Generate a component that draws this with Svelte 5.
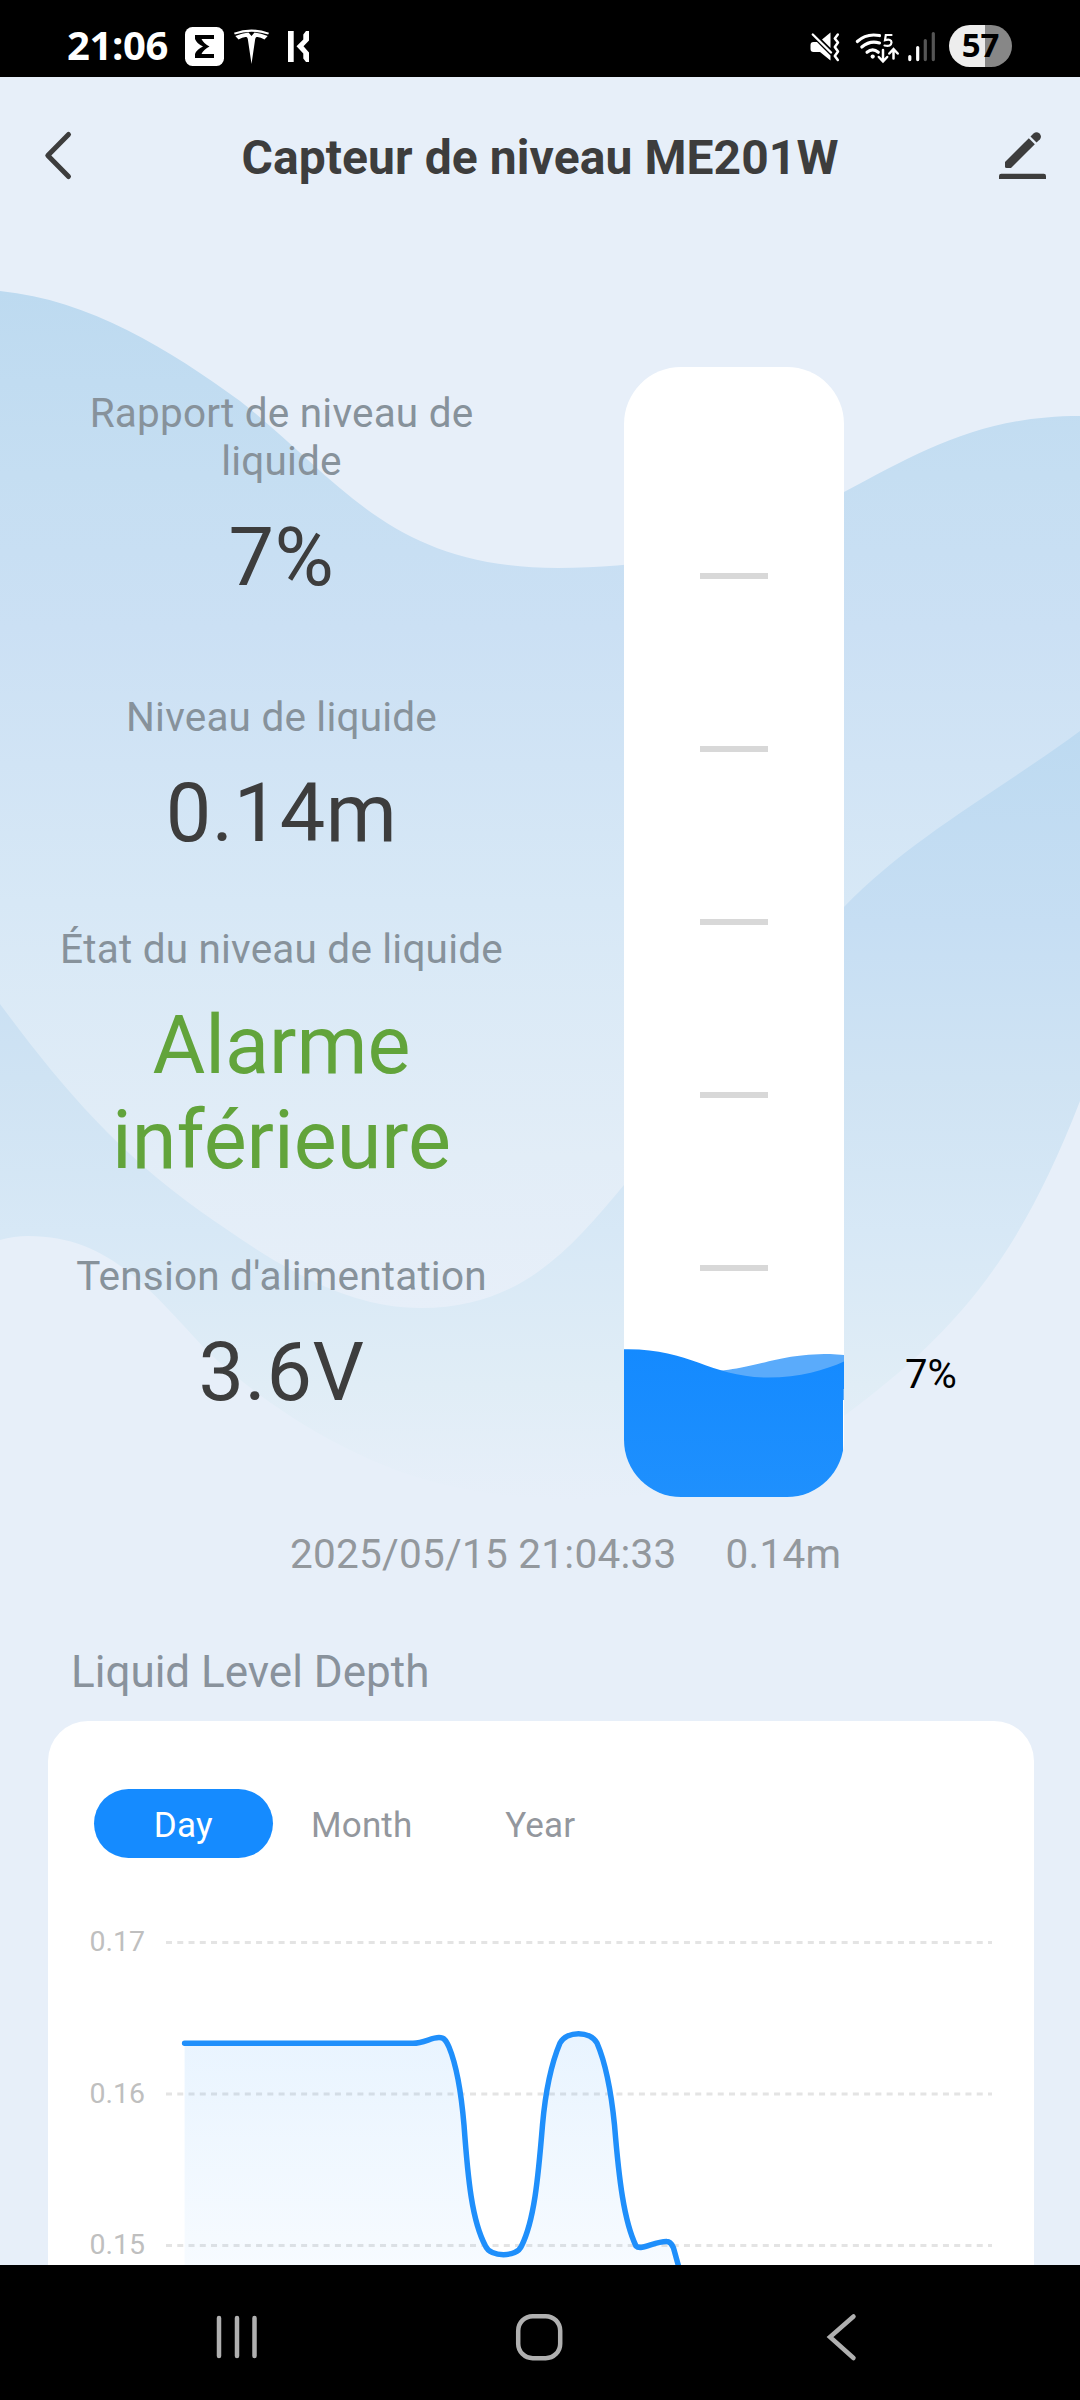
<script>
  const readings = [
    { label: 'Rapport de niveau de liquide', value: '7%', roomy: true },
    { label: 'Niveau de liquide', value: '0.14m' },
    { label: 'État du niveau de liquide', value: 'Alarme inférieure', alarm: true },
    { label: "Tension d'alimentation", value: '3.6V' }
  ];
  const ticks = [573, 746, 919, 1092, 1265];
  const grid = [
    { y: 1942.5, label: '0.17' },
    { y: 2094, label: '0.16' },
    { y: 2245.5, label: '0.15' }
  ];
  const tabs = ['Day', 'Month', 'Year'];
  let active = $state('Day');

  const curve =
    'M184.6 2043.3H413C424 2043.3 431 2037.6 439 2037.6C444 2037.6 446 2040 449 2047C456 2064 461 2090 464 2125C468 2180 472 2221 485.5 2246C490 2257.5 517 2257.5 521.5 2246C534 2221 538 2180 542.5 2125C546 2085 552 2062 560 2043C567 2030.5 590 2030.5 597 2043C606 2064 611 2090 614.5 2125C619 2180 624 2221 636 2246C641 2251 655 2241 667 2241.5C671 2241.5 672 2245 673.5 2248L681 2275';
</script>

<div class="phone">
  <div class="status">
    <div class="status-left">
      <span class="clock">21:06</span>
      <svg class="notif" viewBox="180 20 135 50" width="135" height="50">
        <rect x="185" y="27" width="39" height="39" rx="7.5" fill="#fff" />
        <path d="M195 35H214V39H201.5Q204 44 209.5 46.5Q204 49 201.5 54H214V58H195V54Q197 49 203 46.5Q197 44 195 39Z" fill="#000" />
        <path d="M234 32.8Q251.500 26.300 269 32.800L268.200 34.600Q251.500 28.800 234.800 34.600Z" fill="#fff" />
        <path d="M235.300 36Q242 33 248.500 32.500L251.500 36L254.500 32.500Q261 33 267.700 36L264.500 39.500Q260 36.500 256.500 37Q255.500 37.300 255.200 39L251.500 64L247.800 39Q247.500 37.300 246.500 37Q243 36.500 238.500 39.500Z" fill="#fff" />
        <path d="M288 31H293.700V62H288ZM309 31H306L303.300 34.500V39.500L296.500 46.300L303.300 53.500V58.500L306 62H309V52.500L303.500 46.300L309 40.500Z" fill="#fff" />
      </svg>
    </div>
    <div class="status-right">
      <svg viewBox="805 22 135 45" width="135" height="45" fill="none" stroke="#fff" stroke-linecap="round">
        <path d="M813.500 42H817L830.500 55.500V60.500L820 52H813.500Q810.500 52 810.500 49V45Q810.500 42 813.500 42Z" fill="#fff" stroke="none" />
        <path d="M822 39.500L830.500 32.500V48Z" fill="#fff" stroke="none" />
        <path d="M812.800 34.500L831 52.500" stroke-width="2.400" />
        <path d="M837.800 34.500L834.800 38.500L838 42.500L834.800 47L838 51.500L834.800 56L837.800 60" stroke-width="2.500" stroke-linejoin="round" />
        <path d="M857.300 41.500Q866.500 33 879.500 35.600M861.800 47Q870 40 879.500 43M867 52.300Q872.700 47.500 878.300 52.300" stroke-width="3.100" />
        <circle cx="872.700" cy="56.600" r="2.100" fill="#fff" stroke="none" />
        <path d="M891.500 35H885.800L885 40.200Q891.500 38.500 891.500 42.500Q891.200 47 884.500 45.500" stroke-width="2.200" />
        <path d="M883 50V61M878.800 57L883 61.500L887.200 57M893.500 58.500V49.500M889.300 53.500L893.500 49L897.700 53.500" stroke-width="2.500" />
        <path d="M909.800 56.500V59.600M917.700 47.500V59.600" stroke-width="3.200" />
        <path d="M925.300 40.500V59.600M933.300 33.500V59.600" stroke="#555" stroke-width="3.200" />
      </svg>
      <span class="battery">57</span>
    </div>
  </div>

  <main class="screen">
    <svg class="waves" viewBox="0 77 1080 1500" width="1080" height="1500">
      <defs>
        <linearGradient id="upper" gradientUnits="userSpaceOnUse" x1="0" y1="291" x2="0" y2="1310">
          <stop offset="0" stop-color="#bddaf0" />
          <stop offset=".18" stop-color="#c5def2" />
          <stop offset=".33" stop-color="#cbe0f4" />
          <stop offset=".6" stop-color="#d7e8f6" />
          <stop offset=".85" stop-color="#e2edf7" />
          <stop offset="1" stop-color="#e7eff9" />
        </linearGradient>
        <linearGradient id="lower" gradientUnits="userSpaceOnUse" x1="0" y1="731" x2="0" y2="1500">
          <stop offset="0" stop-color="#bddaf1" />
          <stop offset=".25" stop-color="#c6def3" />
          <stop offset=".45" stop-color="#cfe3f3" />
          <stop offset=".65" stop-color="#d7e8f6" />
          <stop offset=".85" stop-color="#e0edf6" />
          <stop offset="1" stop-color="#e7eff9" />
        </linearGradient>
      </defs>
      <path fill="url(#lower)" d="M0 900H844L1080 700V1101C1020 1255 960 1330 844 1416C700 1520 520 1510 413 1476C330 1448 260 1400 207 1351C150 1290 110 1236 28 1236Q14 1236 0 1240Z" />
      <path fill="url(#upper)" d="M0 291C90 300 170 350 240 401C340 480 390 568 558 568C680 568 760 540 844 492C920 452 980 416 1080 416V731C1000 790 910 838 844 907C780 985 710 1080 624 1185C570 1250 520 1308 421 1308C340 1308 270 1260 200 1211C115 1150 60 1085 0 1004Z" />
    </svg>

    <header>
      <svg viewBox="40 125 36 60" width="36" height="60">
        <path d="M68.500 134.500L47.800 155.500L68.500 176.500" fill="none" stroke="#3d3d3d" stroke-width="5" stroke-linecap="round" stroke-linejoin="round" />
      </svg>
      <h1>Capteur de niveau ME201W</h1>
      <svg viewBox="995 125 55 60" width="55" height="60" fill="#3d3d3d">
        <path d="M1005 162L1028.800 138.200L1034.800 144.200L1011 168H1006.500Q1005 168 1005 166.500Z" />
        <path d="M1030.500 136.500L1033.500 133.500Q1036.500 131 1039.500 133.500Q1042.300 136.500 1039.800 139.500L1036.500 142.500Z" />
        <path d="M999 179V176Q999 173.700 1001.300 173.700H1043.700Q1046 173.700 1046 176V179Z" />
      </svg>
    </header>

    <section class="hero">
      <div class="readings">
        {#each readings as r}
          <div class="reading" class:roomy={r.roomy}>
            <p class="label">{r.label}</p>
            <p class="value" class:alarm={r.alarm}>{r.value}</p>
          </div>
        {/each}
      </div>
      <svg class="tube" viewBox="624 367 220 1130" width="220" height="1130">
        <defs>
          <linearGradient id="water" x1="0" y1="0" x2="0" y2="1">
            <stop offset="0" stop-color="#148aff" />
            <stop offset="1" stop-color="#1f90fd" />
          </linearGradient>
          <clipPath id="glass"><rect x="624" y="367" width="220" height="1130" rx="57" /></clipPath>
        </defs>
        <g clip-path="url(#glass)">
          <rect x="624" y="367" width="220" height="1130" fill="#fff" />
          <path d="M700 1372C760 1370 770 1354 830 1354L844 1355V1400H700Z" fill="#5aabfb" />
          <path d="M624 1349.300C690 1348 710 1377.500 768 1377.500C800 1377.500 825 1370 844 1361.500V1389H843V1497H624Z" fill="url(#water)" />
        </g>
        {#each ticks as y}
          <rect x="700" {y} width="68" height="6" fill="#d8d8d8" />
        {/each}
      </svg>
      <span class="percent">7%</span>
    </section>

    <div class="stamp"><span>2025/05/15 21:04:33</span><span>0.14m</span></div>

    <h2>Liquid Level Depth</h2>
    <section class="card">
      <div class="tabs">
        {#each tabs as t}
          <button class:active={t === active} onclick={() => (active = t)}>{t}</button>
        {/each}
      </div>
      <svg class="chart" viewBox="48 1858 986 407" width="986" height="407">
        <defs>
          <linearGradient id="area" gradientUnits="userSpaceOnUse" x1="0" y1="2035" x2="0" y2="2400">
            <stop offset="0" stop-color="#1f8ffb" stop-opacity=".1" />
            <stop offset="1" stop-color="#1f8ffb" stop-opacity="0" />
          </linearGradient>
        </defs>
        {#each grid as g}
          <text x="145" y={g.y + 8.500}>{g.label}</text>
          <line x1="166" x2="992" y1={g.y} y2={g.y} />
        {/each}
        <path d="{curve}H184.600Z" fill="url(#area)" />
        <path d={curve} fill="none" stroke="#1f8ffb" stroke-width="5.500" stroke-linecap="round" stroke-linejoin="round" />
      </svg>
    </section>
  </main>

  <nav>
    <svg viewBox="215 2310 44 54" width="44" height="54"><path d="M219 2318V2356M237 2318V2356M254.500 2318V2356" /></svg>
    <svg viewBox="512 2310 54 54" width="54" height="54"><rect x="518.200" y="2316.200" width="42" height="42" rx="14.500" /></svg>
    <svg viewBox="824 2310 36 54" width="36" height="54"><path d="M853.500 2316.500L830 2337L853.500 2358" /></svg>
  </nav>
</div>

<style>
  :global(body) {
    margin: 0;
    background: #000;
  }
  .phone {
    width: 1080px;
    height: 2400px;
    display: flex;
    flex-direction: column;
    overflow: hidden;
    background: #000;
    font-family: Roboto, sans-serif;
  }
  svg {
    display: block;
    flex: none;
  }
  p, h1, h2 {
    margin: 0;
    font-weight: 400;
  }
  .status {
    height: 77px;
    flex: none;
    box-sizing: border-box;
    padding: 20px 68px 0 67px;
    display: flex;
    justify-content: space-between;
    color: #fff;
    font-family: 'Open Sans', sans-serif;
    font-weight: 700;
  }
  .status-left, .status-right {
    display: flex;
  }
  .clock {
    width: 113px;
    font-size: 40px;
    line-height: 50px;
    letter-spacing: -0.4px;
  }
  .status-right {
    padding-top: 2px;
    gap: 9px;
  }
  .battery {
    width: 63px;
    height: 42px;
    margin-top: 3px;
    border-radius: 21px;
    background: linear-gradient(90deg, #ededed 36px, #878787 36px);
    color: #000;
    font-size: 33px;
    line-height: 40px;
    text-align: center;
  }
  .screen {
    position: relative;
    height: 2188px;
    flex: none;
    overflow: hidden;
    background: #e7eff9;
    display: flex;
    flex-direction: column;
  }
  .waves {
    position: absolute;
    inset: 0 auto auto 0;
  }
  header, .hero, .stamp, h2, .card {
    position: relative;
  }
  header {
    height: 160px;
    box-sizing: border-box;
    padding: 48px 30px 0 40px;
    display: flex;
    justify-content: space-between;
    align-items: flex-start;
  }
  h1 {
    font-size: 48px;
    line-height: 60px;
    font-weight: 700;
    color: #3d3d3d;
    padding: 3px 0 0 9px;
    letter-spacing: 0.08px;
  }
  .hero {
    height: 1293px;
    display: grid;
    grid-template-columns: 463px 220px 1fr;
    column-gap: 111px;
    padding-left: 50px;
    box-sizing: border-box;
  }
  .readings {
    padding-top: 152px;
    display: flex;
    flex-direction: column;
    gap: 64px;
    text-align: center;
  }
  .reading {
    display: flex;
    flex-direction: column;
    gap: 25px;
  }
  .roomy {
    margin-bottom: 24px;
  }
  .label {
    font-size: 40.5px;
    line-height: 48px;
    letter-spacing: 0.2px;
    color: #87929b;
    padding: 0 4px;
  }
  .value {
    font-size: 81px;
    line-height: 95px;
    color: #3d3d3d;
    letter-spacing: 0.5px;
  }
  .alarm {
    color: #62a43b;
    letter-spacing: 0;
  }
  .tube {
    margin-top: 130px;
  }
  .percent {
    margin: 1114px 0 0 -50px;
    font-size: 40px;
    line-height: 48px;
    color: #000;
  }
  .stamp {
    display: flex;
    gap: 49px;
    padding-left: 290px;
    font-size: 40.5px;
    line-height: 48px;
    letter-spacing: 0.25px;
    color: #93989d;
  }
  h2 {
    margin-top: 68px;
    padding-left: 71px;
    font-size: 44px;
    line-height: 52px;
    letter-spacing: 0;
    color: #89929c;
  }
  .card {
    margin: 23px 46px 0 48px;
    flex: 1;
    background: #fff;
    border-radius: 40px 40px 0 0;
    padding-top: 68px;
  }
  .tabs {
    display: flex;
    padding-left: 46px;
  }
  button {
    width: 178.500px;
    height: 69px;
    padding: 4px 0 0;
    border: 0;
    border-radius: 35px;
    background: none;
    font: 35px/65px Roboto, sans-serif;
    letter-spacing: 0.15px;
    color: #93979d;
  }
  .active {
    background: #158bff;
    color: #fff;
  }
  .chart text {
    font-size: 28.500px;
    fill: #bfbfbf;
    text-anchor: end;
  }
  .chart line {
    stroke: #e4e4e4;
    stroke-width: 3;
    stroke-dasharray: 6 5.260;
  }
  nav {
    height: 135px;
    box-sizing: border-box;
    padding: 45px 220px 0 215px;
    display: flex;
    justify-content: space-between;
    fill: none;
    stroke: #b0b0b0;
    stroke-width: 4.500;
    stroke-linecap: round;
  }
  nav svg:nth-child(2) {
    margin-right: 5px;
  }
</style>
